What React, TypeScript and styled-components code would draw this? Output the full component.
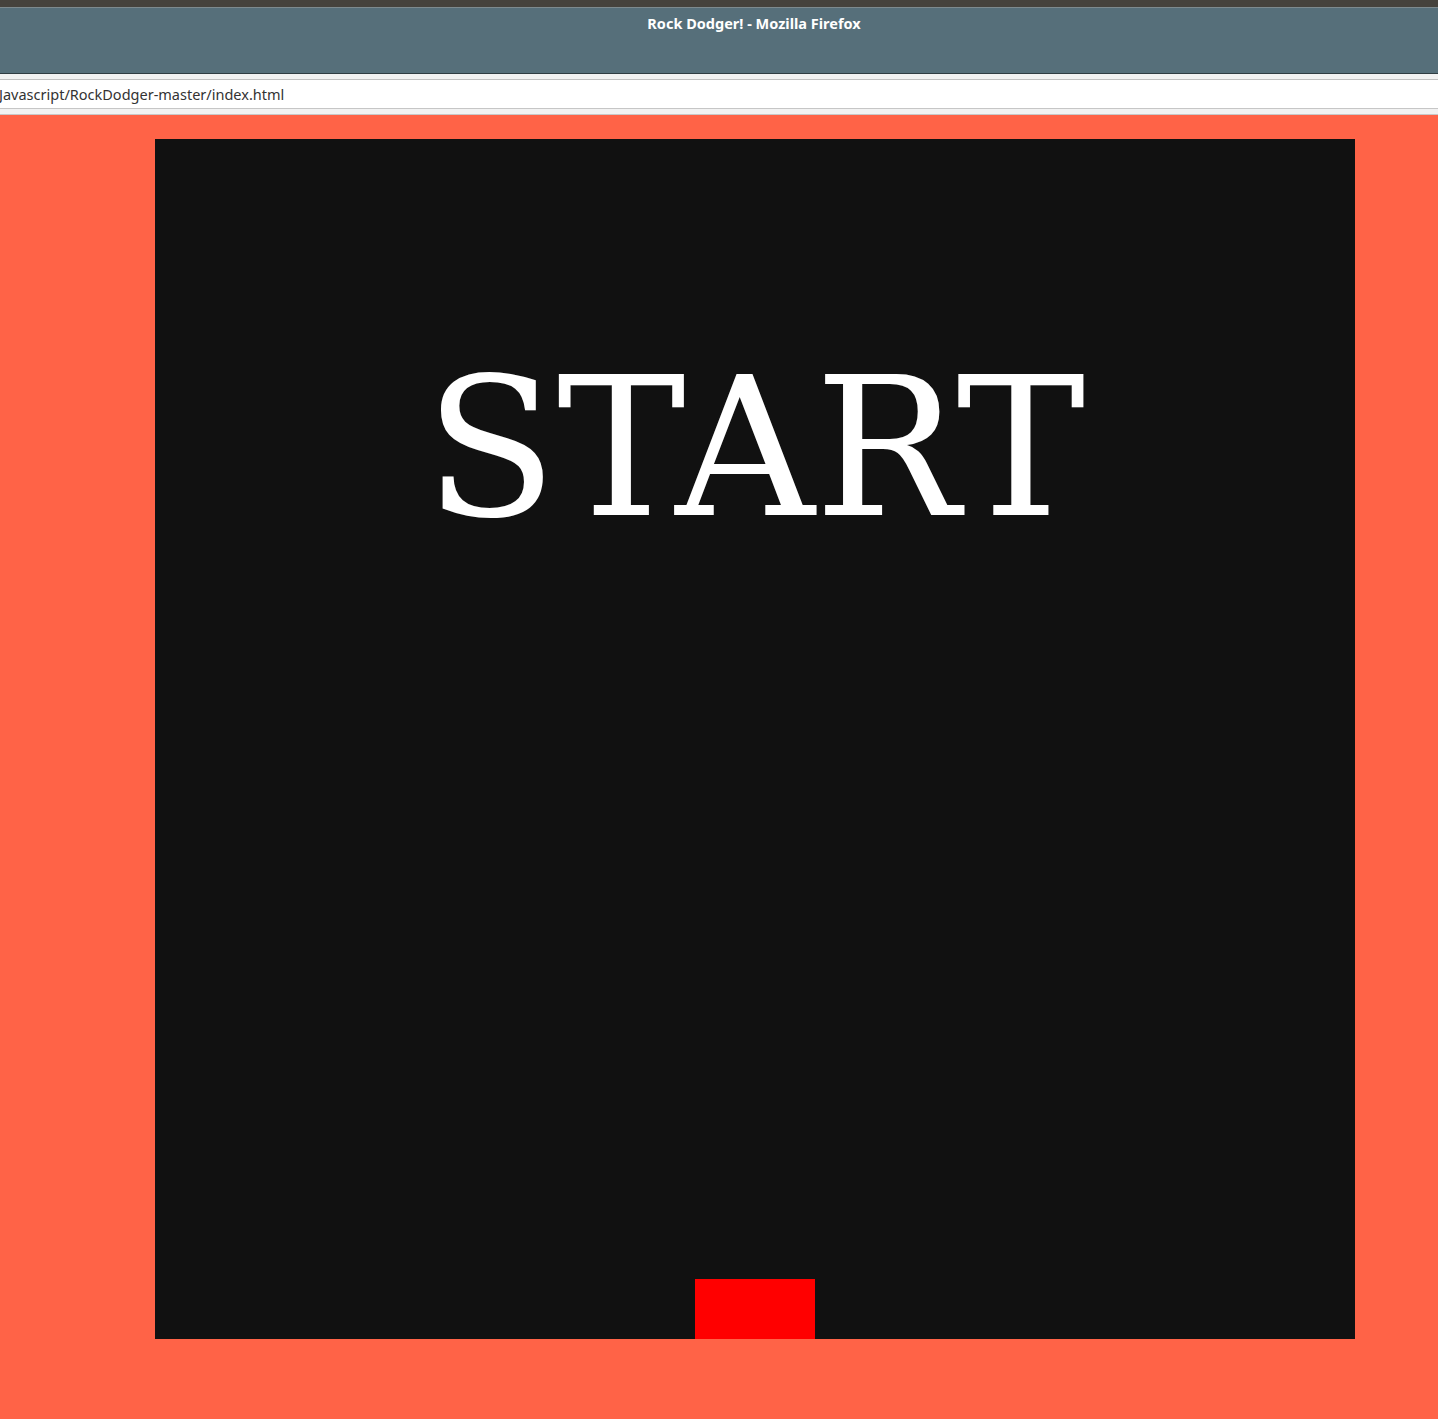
import React from "react";
import styled, { createGlobalStyle } from "styled-components";

const Global = createGlobalStyle`
  html, body { margin: 0; padding: 0; background: #ff6347; }
  #root { min-height: 1419px; }
`;

const Window = styled.div`
  display: flex;
  flex-direction: column;
  width: 1438px;
  min-height: 1419px;
  background: #ff6347;
`;

const TopStrip = styled.div`
  height: 7px;
  background: #45423c;
  border-bottom: 1px solid #7d8a8e;
`;

const TitleBar = styled.div`
  height: 66px;
  background: #566f7a;
  border-bottom: 1px solid #2f3d42;
  display: flex;
  justify-content: center;
  align-items: flex-start;
  padding-top: 6px;
  box-sizing: border-box;
  padding-left: 70px;
`;

const Title = styled.span`
  font-family: "Noto Sans", "DejaVu Sans", sans-serif;
  font-weight: 700;
  font-size: 14.5px;
  line-height: 18px;
  color: #ffffff;
`;

const Gap = styled.div`
  height: 5px;
  background: #f2f2f2;
  border-bottom: 1px solid #c0c0c0;
`;

const UrlBar = styled.div`
  height: 28px;
  background: #ffffff;
  display: flex;
  align-items: center;
  border-bottom: 1px solid #c6c6c6;
`;

const UrlText = styled.span`
  font-family: "Noto Sans", "DejaVu Sans", sans-serif;
  font-size: 14.5px;
  color: #333333;
  margin-left: -1px;
`;

const BottomGap = styled.div`
  height: 5px;
  background: #f2f2f2;
  border-bottom: 1px solid #c8c8c8;
`;

const Page = styled.div`
  flex: 1;
  background: #ff6347;
  padding: 24px 0 0 155px;
`;

const GameCanvas = styled.div`
  position: relative;
  width: 1200px;
  height: 1200px;
  background: #111111;
  display: flex;
  justify-content: center;
  overflow: hidden;
`;

const StartText = styled.div`
  font-family: "DejaVu Serif", serif;
  font-size: 193px;
  line-height: 1;
  color: #ffffff;
  margin-top: 213px;
  height: 240px;
`;

const Player = styled.div`
  position: absolute;
  left: 540px;
  top: 1140px;
  width: 120px;
  height: 60px;
  background: #ff0000;
`;

export default function App() {
  return (
    <>
      <Global />
      <Window>
        <TopStrip />
        <TitleBar>
          <Title>Rock Dodger! - Mozilla Firefox</Title>
        </TitleBar>
        <Gap />
        <UrlBar>
          <UrlText>Javascript/RockDodger-master/index.html</UrlText>
        </UrlBar>
        <BottomGap />
        <Page>
          <GameCanvas>
            <StartText>START</StartText>
            <Player />
          </GameCanvas>
        </Page>
      </Window>
    </>
  );
}
